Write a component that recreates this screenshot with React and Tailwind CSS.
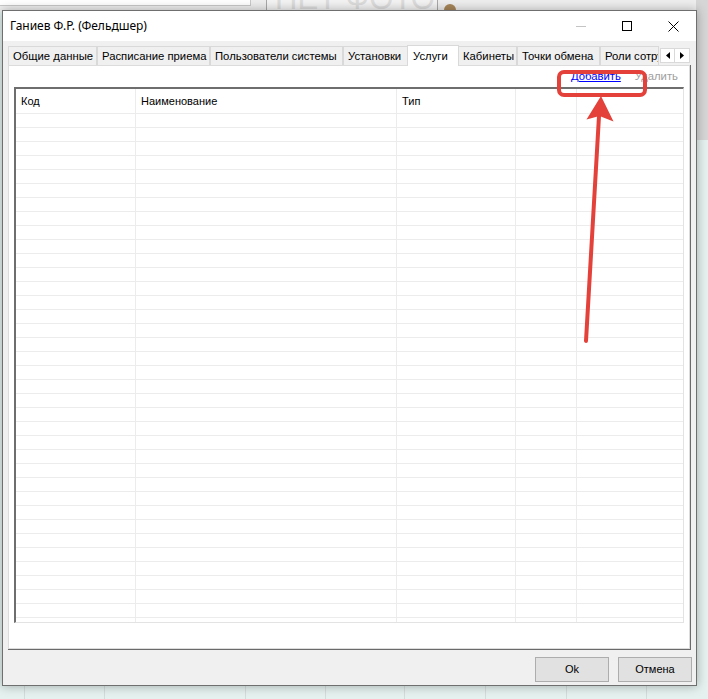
import React from 'react';

const TABS = [
    { label: 'Общие данные', w: 'w-[89px]' },
    { label: 'Расписание приема', w: 'w-[113px]' },
    { label: 'Пользователи системы', w: 'w-[133px]' },
    { label: 'Установки', w: 'w-[65px]' },
    { label: 'Услуги', w: 'w-[52px]', active: true },
    { label: 'Кабинеты', w: 'w-[59px]' },
    { label: 'Точки обмена', w: 'w-[83px]' },
    { label: 'Роли сотрудников', w: 'w-[59px]' },
];

const ROWS = Array.from({ length: 37 });

const Cell = ({ w, last }) => (
    <div className={`${w} ${last ? 'flex-1' : 'shrink-0 border-r border-[#ececec]'} h-full`}></div>
);

const App = () => {
    return (
        <div className="relative w-[708px] h-[699px] overflow-hidden bg-[#e4f1ef] font-['Liberation_Sans',sans-serif] text-[11px] text-black">
            {/* background of the app behind the dialog */}
            <div className="absolute inset-0">
                <div className="h-[12px] bg-[#eeeeee] flex">
                    <div className="w-[251px] h-[6px] bg-white border-r border-b border-[#c8c8c8]"></div>
                    <div className="w-[15px]"></div>
                    <div className="w-[172px] h-[12px] bg-[#f3f3f3] border-l border-r border-[#a8a8a8] overflow-hidden relative">
                        <span className="absolute left-[8px] -top-[17px] text-[31px] leading-none whitespace-nowrap text-[#dcdcdc]">НЕТ ФОТО</span>
                    </div>
                    <div className="w-[12px] h-[12px] ml-[6px] mt-[4px] rounded-full bg-[#a8875a]"></div>
                </div>
                <div className="absolute right-0 top-0 w-[12px] h-[140px] bg-[#d6d6d6]"></div>
                <div className="absolute bottom-0 left-0 right-0 h-[15px] flex">
                    {[25, 80, 141, 80, 79, 81, 81, 80].map((w, i) => (
                        <div key={i} style={{ width: w }} className="h-full border-r border-[#d3dcdb]"></div>
                    ))}
                </div>
            </div>

            {/* dialog window */}
            <div className="relative ml-[2px] mt-[10px] w-[695px] h-[676px] bg-[#f0f0f0] border border-[#6f6f6f] shadow-[0_0_10px_rgba(0,0,0,0.3)] flex flex-col">
                {/* title bar */}
                <div className="h-[30px] bg-white flex items-center shrink-0">
                    <span className="pl-[7px] flex-1 text-[12px] font-['Noto_Sans',sans-serif] text-black">Ганиев Ф.Р. (Фельдшер)</span>
                    <div className="w-[46px] h-full flex items-center justify-center">
                        <div className="w-[10px] h-px bg-[#c4c4c4]"></div>
                    </div>
                    <div className="w-[46px] h-full flex items-center justify-center">
                        <div className="w-[10px] h-[10px] border border-black"></div>
                    </div>
                    <div className="w-[46px] h-full flex items-center justify-center">
                        <svg width="11" height="11" viewBox="0 0 11 11">
                            <path d="M0.5 0.5 L10.5 10.5 M10.5 0.5 L0.5 10.5" stroke="#000" strokeWidth="1" />
                        </svg>
                    </div>
                </div>

                {/* tabs */}
                <div className="flex items-end h-[24px] pl-[5px] shrink-0">
                    {TABS.map((t) => (
                        <div
                            key={t.label}
                            className={`${t.w} shrink-0 overflow-hidden whitespace-nowrap border border-b-0 ${t.active ? 'h-[21px] bg-white border-[#d9d9d9] pl-[5px] -mx-[1px] relative z-10 mb-[-1px]' : 'h-[19px] bg-[#f0f0f0] border-[#d9d9d9] pl-[4px]'} flex items-center text-[11.3px]`}
                        >
                            {t.label}
                        </div>
                    ))}
                    <div className="flex ml-[1px] mb-[2px]">
                        <div className="w-[15px] h-[15px] bg-white border border-[#d9d9d9] flex items-center justify-center">
                            <svg width="4" height="7" viewBox="0 0 4 7"><path d="M4 0 L0 3.5 L4 7 Z" fill="#000" /></svg>
                        </div>
                        <div className="w-[15px] h-[15px] bg-white border border-l-0 border-[#d9d9d9] flex items-center justify-center">
                            <svg width="4" height="7" viewBox="0 0 4 7"><path d="M0 0 L4 3.5 L0 7 Z" fill="#000" /></svg>
                        </div>
                    </div>
                </div>

                {/* tab page */}
                <div className="mx-[5px] h-[585px] shrink-0 border-r border-b border-[#6a6a6a]">
                    <div className="h-full bg-white border border-[#dcdcdc] flex flex-col">
                        <div className="h-[21px] flex items-center justify-end gap-[14px] pr-[11px] shrink-0">
                            <span className="text-[#0000ff] underline text-[11.3px]">Добавить</span>
                            <span className="text-[#a0a0a0] text-[11.3px]">Удалить</span>
                        </div>
                        <div className="ml-[5px] mr-[5px] h-[536px] border-l-2 border-t-2 border-[#6e6e6e] border-r border-b border-r-[#e3e3e3] border-b-[#e3e3e3] overflow-hidden flex flex-col">
                            <div className="h-[25px] flex shrink-0 border-b border-[#ececec]">
                                <div className="w-[120px] shrink-0 border-r border-[#ececec] flex items-center pl-[5px]">Код</div>
                                <div className="w-[261px] shrink-0 border-r border-[#ececec] flex items-center pl-[5px]">Наименование</div>
                                <div className="w-[119px] shrink-0 border-r border-[#ececec] flex items-center pl-[5px]">Тип</div>
                                <div className="w-[61px] shrink-0 border-r border-[#ececec]"></div>
                                <div className="flex-1"></div>
                            </div>
                            {ROWS.map((_, i) => (
                                <div key={i} className="h-[14px] flex shrink-0 border-b border-[#ececec]">
                                    <Cell w="w-[120px]" />
                                    <Cell w="w-[261px]" />
                                    <Cell w="w-[119px]" />
                                    <Cell w="w-[61px]" />
                                    <Cell last />
                                </div>
                            ))}
                        </div>
                    </div>
                </div>

                {/* buttons */}
                <div className="flex-1 flex justify-end items-start gap-[9px] pt-[7px] pr-[4px]">
                    <button className="w-[74px] h-[25px] bg-[#e1e1e1] border border-[#adadad] text-[11px]">Ok</button>
                    <button className="w-[74px] h-[25px] bg-[#e1e1e1] border border-[#adadad] text-[11px]">Отмена</button>
                </div>
            </div>

            {/* red annotation */}
            <svg className="absolute left-0 top-0 pointer-events-none" width="708" height="699" viewBox="0 0 708 699">
                <rect x="559" y="72" width="86" height="23" rx="5" fill="none" stroke="#e3413a" strokeWidth="4" />
                <path d="M586 341 L599 116" stroke="#e3413a" strokeWidth="4" strokeLinecap="round" />
                <path d="M601 96 L586.5 119.5 L599.5 116 L613.5 121.5 Z" fill="#e3413a" />
            </svg>
        </div>
    );
};

export default App;
